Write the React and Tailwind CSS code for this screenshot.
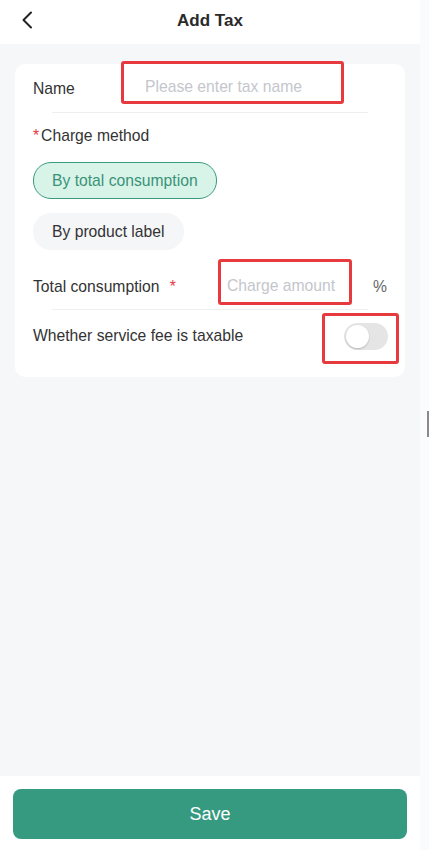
import React, { useState } from "react";

const font = { fontFamily: '"Liberation Sans", Arial, sans-serif' };

const App = () => {
  const [method, setMethod] = useState("total");
  const [taxable, setTaxable] = useState(false);

  return (
    <div className="relative flex h-[850px] w-[429px] bg-[#f7f8fa] text-[#333]" style={font}>
      <div className="flex w-[420px] flex-col bg-[#f6f7f9]">
        {/* Header */}
        <div className="relative flex h-[44px] items-center justify-center bg-white">
          <button className="absolute left-[20px] top-[11px] text-[#222]">
            <svg width="16" height="18" viewBox="0 0 16 18" fill="none">
              <path d="M11 1.5 L3.5 9 L11 16.5" stroke="currentColor" strokeWidth="2" strokeLinecap="round" strokeLinejoin="round" />
            </svg>
          </button>
          <h1 className="-mt-[2px] text-[17px] font-bold text-[#2a2a2a]">Add Tax</h1>
        </div>

        {/* Form card */}
        <div className="flex-1 px-[15px] pt-[20px]">
          <div className="rounded-[10px] bg-white pb-[15px] text-[15.7px]">
            {/* Name */}
            <div className="flex h-[48px] items-center pl-[18px]">
              <span className="mt-[2px] w-[88px]">Name</span>
              <div className="mb-[12px] flex h-[43px] w-[223px] items-start rounded-[3px] border-[3px] border-[#e63a3e] pl-[21px] pt-[14px]">
                <input
                  className="h-[18px] w-full bg-transparent leading-[18px] outline-none placeholder:text-[#c4c6cc]"
                  placeholder="Please enter tax name"
                />
              </div>
            </div>
            <div className="mx-[37px] h-px bg-[#efefef]" />

            {/* Charge method */}
            <div className="flex h-[46px] items-center pl-[18px]">
              <span className="mr-[2px] text-[#e63a3e]">*</span>
              <span>Charge method</span>
            </div>
            <div className="flex flex-col items-start gap-[14px] pl-[18px] pt-[3px]">
              <button
                onClick={() => setMethod("total")}
                className={`h-[37px] rounded-[18px] border px-[18px] ${
                  method === "total"
                    ? "border-[#3b9a7e] bg-[#d8f4e8] text-[#3a9278]"
                    : "border-[#f5f6f8] bg-[#f5f6f8] text-[#333]"
                }`}
              >
                By total consumption
              </button>
              <button
                onClick={() => setMethod("label")}
                className={`h-[37px] rounded-[18px] border px-[18px] ${
                  method === "label"
                    ? "border-[#3b9a7e] bg-[#d8f4e8] text-[#3a9278]"
                    : "border-[#f5f6f8] bg-[#f5f6f8] text-[#333]"
                }`}
              >
                By product label
              </button>
            </div>

            {/* Total consumption */}
            <div className="mt-[11px] flex h-[48px] items-center pl-[18px]">
              <span className="mt-[3px] w-[185px]">
                Total consumption <span className="ml-[6px] text-[#e63a3e]">*</span>
              </span>
              <div className="mt-[-7px] flex h-[46px] w-[134px] items-start rounded-[3px] border-[3px] border-[#e63a3e] pl-[6px] pt-[15px]">
                <input
                  className="h-[18px] w-full bg-transparent leading-[18px] outline-none placeholder:text-[#c4c6cc]"
                  placeholder="Charge amount"
                />
              </div>
              <span className="ml-[21px] mt-[3px] text-[#666]">%</span>
            </div>
            <div className="mx-[37px] h-px bg-[#efefef]" />

            {/* Taxable */}
            <div className="flex h-[52px] items-center justify-between pl-[18px] pr-[6px]">
              <span>Whether service fee is taxable</span>
              <div className="mt-[4px] flex h-[51px] w-[77px] items-start justify-end rounded-[3px] border-[3px] border-[#e63a3e] pr-[8px] pt-[7px]">
                <button
                  onClick={() => setTaxable(!taxable)}
                  className={`flex h-[27px] w-[44px] items-center rounded-full p-[2px] ${
                    taxable ? "justify-end bg-[#359a80]" : "justify-start bg-[#e5e5e5]"
                  }`}
                >
                  <span className="h-[23px] w-[23px] rounded-full bg-white shadow-[0_1px_2px_rgba(0,0,0,0.2)]" />
                </button>
              </div>
            </div>
          </div>
        </div>

        {/* Bottom bar */}
        <div className="flex h-[74px] items-start bg-white px-[13px] pt-[13px]">
          <button className="h-[50px] w-full rounded-[8px] bg-[#359a80] text-[18px] text-white">
            Save
          </button>
        </div>
      </div>
      <div className="relative flex-1 bg-[#fafbfc]">
        <div className="absolute right-0 top-[411px] h-[26px] w-[2px] bg-[#8a8a8a]" />
      </div>
    </div>
  );
};

export default App;
